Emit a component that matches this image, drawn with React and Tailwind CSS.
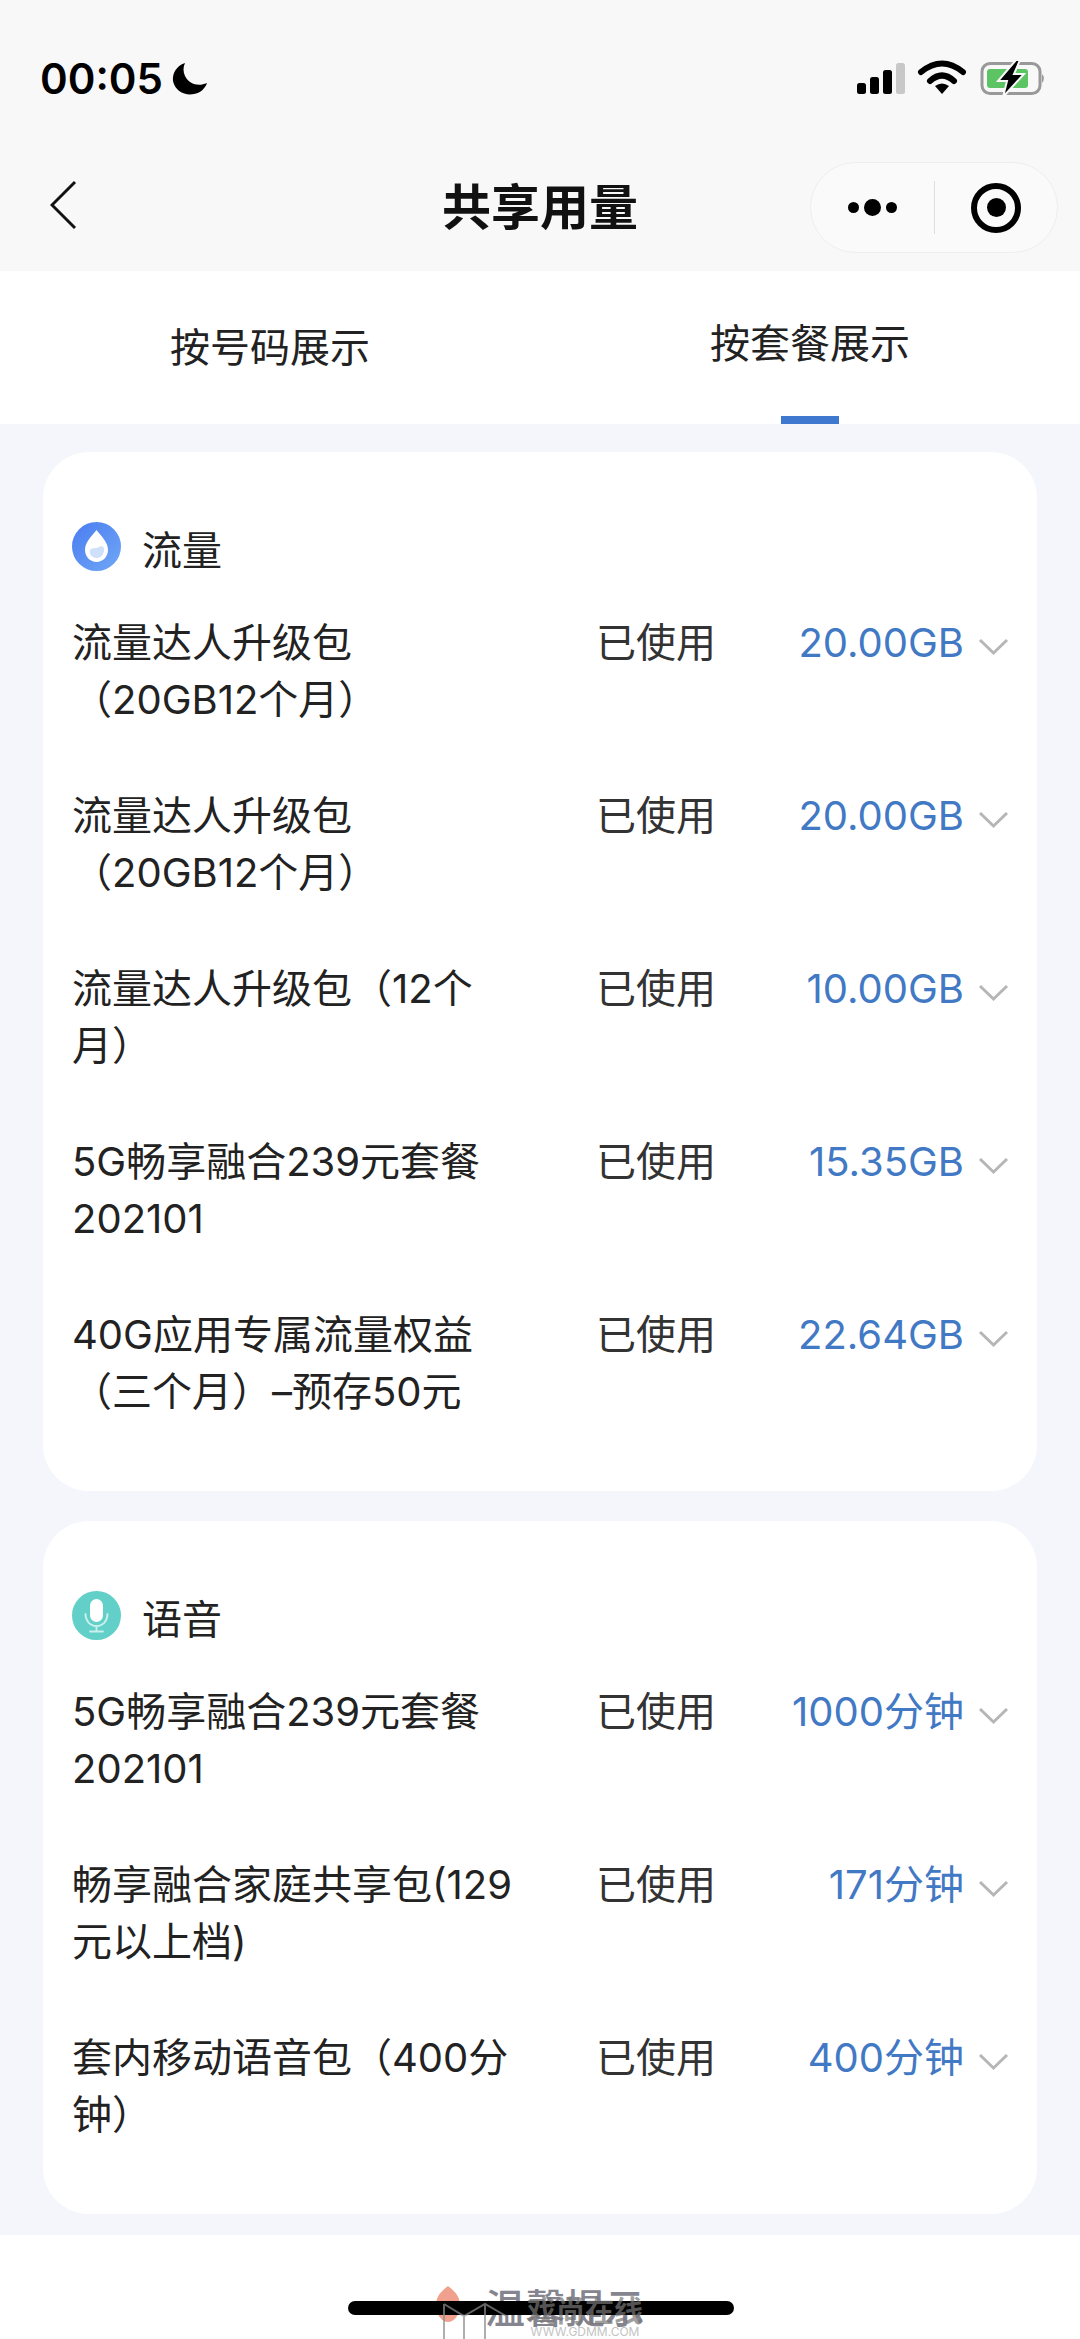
const traffic = [
  { name: "流量达人升级包（20GB12个月）", value: "20.00GB" },
  { name: "流量达人升级包（20GB12个月）", value: "20.00GB" },
  { name: "流量达人升级包（12个月）", value: "10.00GB" },
  { name: "5G畅享融合239元套餐202101", value: "15.35GB" },
  { name: "40G应用专属流量权益（三个月）–预存50元", value: "22.64GB" },
];

const voice = [
  { name: "5G畅享融合239元套餐202101", value: "1000分钟" },
  { name: "畅享融合家庭共享包(129元以上档)", value: "171分钟" },
  { name: "套内移动语音包（400分钟）", value: "400分钟" },
];

function StatusIcons() {
  return (
    <svg width="192" height="34" viewBox="0 0 192 34" className="overflow-visible">
      <rect x="2" y="22" width="9" height="11" rx="2.5" fill="#000" />
      <rect x="15" y="16" width="9" height="17" rx="2.5" fill="#000" />
      <rect x="28" y="9" width="9" height="24" rx="2.5" fill="#000" />
      <rect x="41" y="2" width="9" height="31" rx="2.5" fill="#c8c8c8" />
      <path d="M66 11 Q87 -6 108 11" fill="none" stroke="#000" strokeWidth="6" strokeLinecap="round" />
      <path d="M75 20 Q87 9 99 20" fill="none" stroke="#000" strokeWidth="6" strokeLinecap="round" />
      <path d="M80 25 Q87 20 94 25 L87 33 Z" fill="#000" />
      <rect x="127" y="2.5" width="58" height="30" rx="8" fill="none" stroke="#999" strokeWidth="3" />
      <rect x="132" y="8" width="41" height="19" rx="3" fill="#5cc463" />
      <path d="M187 13 Q191 17 187 22 Z" fill="#999" />
      <path d="M161 -1 L143 20 L152 20 L148 36 L169 13 L159 13 L165 -1 Z" fill="#000" stroke="#f8f8f8" strokeWidth="2" />
    </svg>
  );
}

function DropIcon() {
  return (
    <svg width="49" height="49" viewBox="0 0 49 49">
      <defs>
        <linearGradient id="dropBg" x1="0" y1="0" x2="1" y2="1">
          <stop offset="0" stopColor="#4a7cf0" />
          <stop offset="1" stopColor="#70a8f6" />
        </linearGradient>
      </defs>
      <circle cx="24.5" cy="24.5" r="24.5" fill="url(#dropBg)" />
      <path d="M24.5 8 C29 14 36 20 36 28 C36 35 30.5 40 24.5 40 C18.5 40 13 35 13 28 C13 20 20 14 24.5 8 Z" fill="#fff" />
      <path d="M18 28 C21 25 24 27 27 25 C30 23 33 25 32 29 C31 34 28 36 24.5 36 C20 36 17 32 18 28 Z" fill="#cfe0fa" />
    </svg>
  );
}

function MicIcon() {
  return (
    <svg width="49" height="49" viewBox="0 0 49 49">
      <circle cx="24.5" cy="24.5" r="24.5" fill="#62d0c8" />
      <rect x="18" y="8" width="13" height="23" rx="6.5" fill="#fff" />
      <path d="M13.5 23 C13.5 30 18 35 24.5 35 C31 35 35.5 30 35.5 23" fill="none" stroke="#c9f0ec" strokeWidth="1.8" strokeLinecap="round" />
      <path d="M24.5 35 V40 M18 40.5 H31" fill="none" stroke="#c9f0ec" strokeWidth="1.8" strokeLinecap="round" />
    </svg>
  );
}

function Row({ name, value }) {
  return (
    <div className="flex items-start text-[40px] leading-[57px]">
      <div className="w-[445px] text-[#222222]">{name}</div>
      <div className="ml-[79px] w-[120px] text-[#333333]">已使用</div>
      <div className="flex-1 text-right text-[#4279c4]">{value}</div>
      <svg className="mt-[24px] ml-[14px] shrink-0" width="31" height="18" viewBox="0 0 31 18">
        <path d="M2 2 L15.5 15 L29 2" fill="none" stroke="#b6b6b6" strokeWidth="3" />
      </svg>
    </div>
  );
}

function Card({ icon, title, rows }) {
  return (
    <section className="rounded-[46px] bg-white pt-[70px] pr-[28px] pb-[71px] pl-[29px]">
      <div className="flex items-start">
        {icon}
        <div className="ml-[21px] text-[40px] leading-[57px] text-[#222222]">{title}</div>
      </div>
      <div className="mt-[35px] flex flex-col gap-[59px]">
        {rows.map((row, i) => (
          <Row key={i} {...row} />
        ))}
      </div>
    </section>
  );
}

export default function App() {
  return (
    <div
      className="relative h-[2339px] w-[1080px] overflow-hidden bg-[#f4f6fb]"
      style={{ fontFamily: 'Inter, "Noto Sans CJK SC", sans-serif' }}
    >
      <header className="h-[271px] bg-[#f8f8f8]">
        <div className="flex h-[162px] items-start justify-between pt-[56px] pr-[33px] pl-[40px]">
          <div className="flex items-center gap-[9px]">
            <span className="text-[42px] leading-[46px] font-semibold text-black">00:05</span>
            <svg width="36" height="34" viewBox="0 0 36 34">
              <path d="M13 1 C4 4 0 12 1 19 C3 29 13 34 22 32 C28 31 33 27 35 21 C26 25 17 22 13 14 C11 10 11 5 13 1 Z" fill="#000" />
            </svg>
          </div>
          <div className="pt-[5px]">
            <StatusIcons />
          </div>
        </div>
        <div className="relative flex h-[91px] items-center justify-center">
          <svg className="absolute top-[18px] left-[50px]" width="27" height="50" viewBox="0 0 27 50">
            <path d="M25 2 L2 25 L25 48" fill="none" stroke="#111" strokeWidth="3" />
          </svg>
          <h1 className="text-[49px] leading-[57px] font-bold text-[#111111]">共享用量</h1>
          <div className="absolute top-0 right-[22px] flex h-[91px] w-[248px] items-center rounded-full border border-[#eeeeee] bg-[#fafafa]">
            <div className="flex w-[123px] items-center justify-center gap-[5px]">
              <span className="h-[11px] w-[11px] rounded-full bg-black" />
              <span className="h-[17px] w-[17px] rounded-full bg-black" />
              <span className="h-[11px] w-[11px] rounded-full bg-black" />
            </div>
            <div className="h-[53px] w-px bg-[#dedede]" />
            <div className="flex flex-1 items-center justify-center">
              <div className="flex h-[50px] w-[50px] items-center justify-center rounded-full border-[6px] border-black">
                <span className="h-[19px] w-[19px] rounded-full bg-black" />
              </div>
            </div>
          </div>
        </div>
      </header>

      <nav className="grid h-[153px] grid-cols-2 bg-white text-[40px] leading-[57px] text-[#222222]">
        <div className="flex items-center justify-center">按号码展示</div>
        <div className="flex flex-col items-center pt-[44px]">
          <span>按套餐展示</span>
          <span className="mt-auto h-[8px] w-[58px] bg-[#3f78cf]" />
        </div>
      </nav>

      <main className="flex flex-col gap-[30px] px-[43px] pt-[28px]">
        <Card icon={<DropIcon />} title="流量" rows={traffic} />
        <Card icon={<MicIcon />} title="语音" rows={voice} />
      </main>

      <footer className="absolute top-[2235px] right-0 bottom-0 left-0 flex justify-center bg-white pt-[50px]">
        <div className="flex items-start gap-[24px]">
          <svg width="26" height="38" viewBox="0 0 26 38">
            <path d="M13 1 C18 5 25 10 25 20 C25 30 19 37 13 37 C7 37 1 30 1 20 C1 10 8 5 13 1 Z" fill="#f0a08c" />
          </svg>
          <span className="text-[40px] leading-[48px] font-medium text-[#858590]">温馨提示</span>
        </div>
      </footer>

      <div className="absolute top-[2301px] left-[348px] h-[14px] w-[386px] rounded-full bg-black" />

      <div className="absolute top-[2298px] left-[443px] flex items-start gap-[20px] opacity-70">
        <svg width="64" height="41" viewBox="0 0 64 41">
          <path d="M1 6 L21 18 L42 6 L63 18 M21 18 V41 M42 6 V41 M1 6 V41" fill="none" stroke="#8d8d8d" strokeWidth="2" />
        </svg>
        <div className="flex flex-col items-center">
          <span className="text-[29px] leading-[28px] font-bold text-[#777777]">戏尚在线</span>
          <span className="text-[12px] leading-[12px] text-[#aaaaaa]">WWW.GDMM.COM</span>
        </div>
      </div>
    </div>
  );
}
